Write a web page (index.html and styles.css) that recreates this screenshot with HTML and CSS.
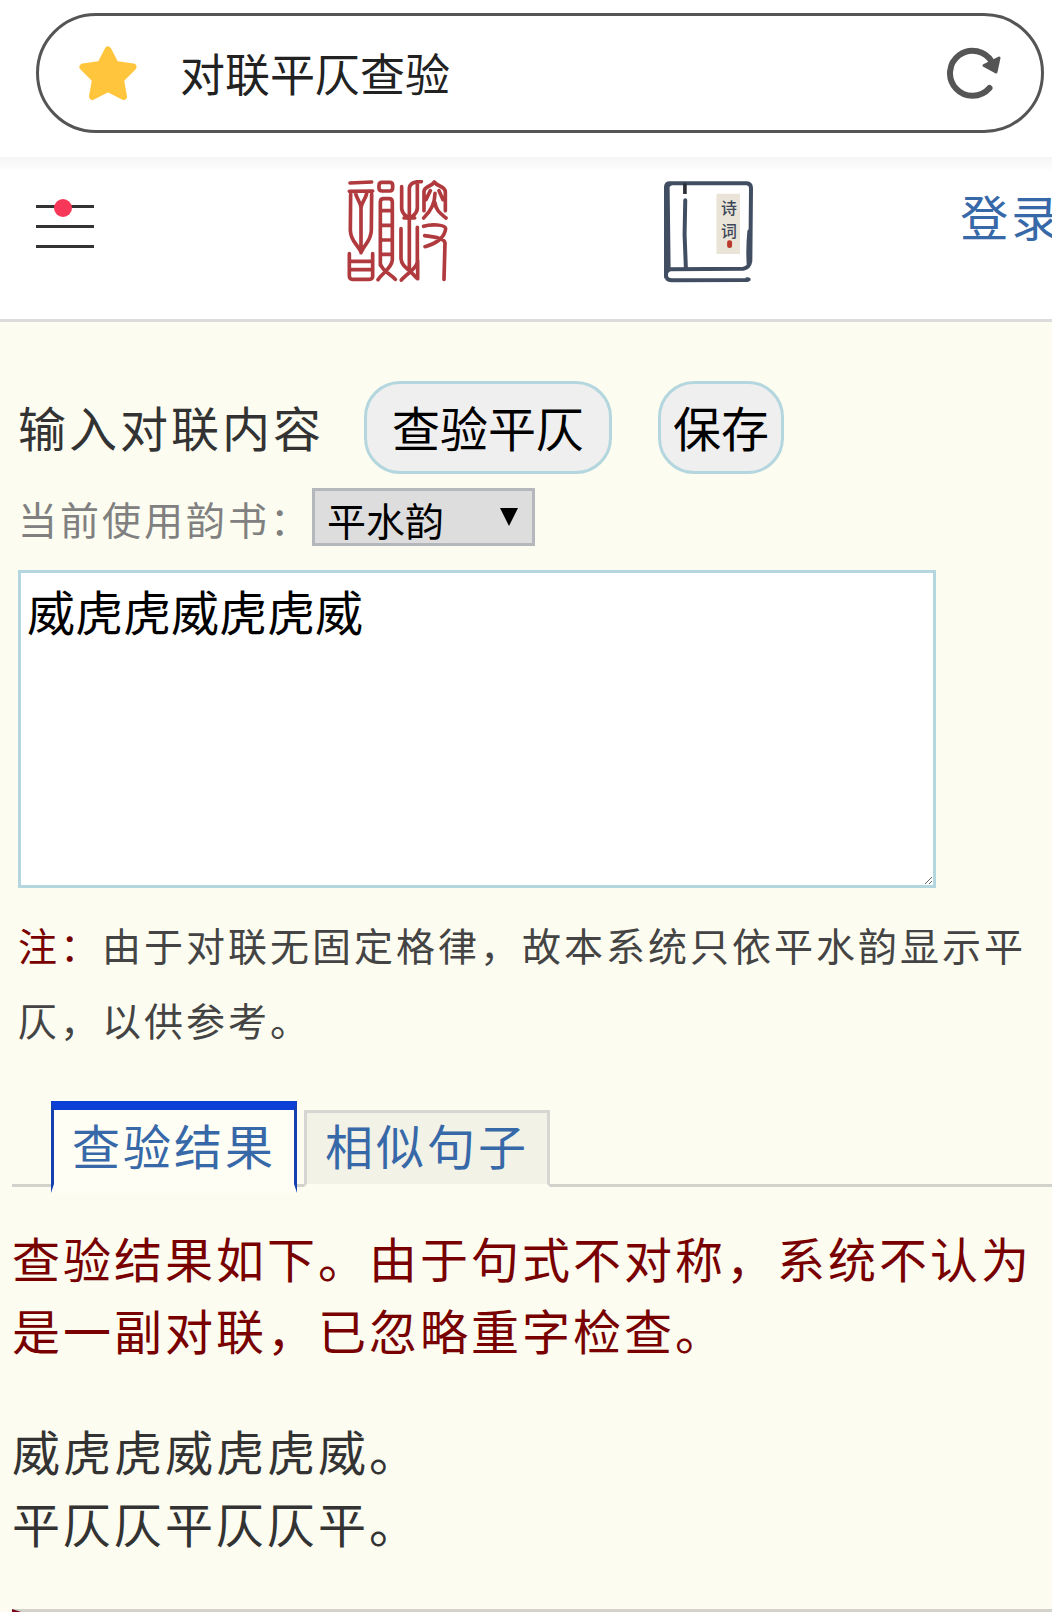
FILE: index.html
```html
<!DOCTYPE html>
<html lang="zh-CN">
<head>
<meta charset="utf-8">
<meta name="viewport" content="width=device-width">
<title>对联平仄查验</title>
<link rel="stylesheet" href="styles.css">
</head>
<body>
<div class="browser-bar">
  <div class="address">
    <svg class="star" viewBox="0 0 58 56" aria-hidden="true"><path d="M29 5 L36.500 19.500 L54 22 L41.500 34.500 L44.500 51.500 L29 43.500 L13.500 51.500 L16.500 34.500 L4 22 L21.500 19.500 Z"/></svg>
    <span class="address-title">对联平仄查验</span>
    <button class="reload" type="button" aria-label="刷新">
      <svg viewBox="0 0 54 52" aria-hidden="true"><path class="reload-arc" d="M45 15 A22.500 22.500 0 1 0 42.500 41"/><path class="reload-head" d="M37 18.500 L52 11 L49 25 Z"/></svg>
    </button>
  </div>
</div>

<header class="site-header">
  <button class="menu" type="button" aria-label="菜单">
    <span class="menu-line"></span><span class="menu-line"></span><span class="menu-line"></span>
    <span class="menu-dot"></span>
  </button>
  <a class="logo" href="#" aria-label="搜韵">
    <svg class="seal" viewBox="52 44 304 309" aria-hidden="true">
      <path d="M60 53 L125 50 M58 78 L128 77 M62 86 L61 195 C62 228 82 236 92 258 M125 86 L124 195 C123 228 104 236 95 258 M77 84 C80 102 93 112 93 128 C94 112 107 102 110 84 M93 125 V262 M58 265 V332 Q58 342 68 342 H118 Q128 342 128 332 V265 M60 288 H126 M60 313 H126"/>
      <path d="M156 51 H179 Q188 51 188 60 V68 Q188 77 179 77 H156 Q147 77 147 68 V60 Q147 51 156 51 M151 300 V110 Q151 100 161 100 H177 Q187 100 187 110 V285 C184 310 158 322 144 343 M151 295 C156 318 182 325 196 342 M152 136 H186 M152 180 H186 M152 224 H186 M152 267 H186"/>
      <path d="M215 64 V130 C216 148 230 151 238 162 C246 151 261 148 262 130 V50 M238 320 V68 C240 53 253 48 274 49 M213 190 V280 C215 305 236 309 260 338 M262 186 V290 C259 312 230 325 214 344 M222 158 H254 M263 285 V340"/>
      <path d="M282 136 V78 C283 62 304 65 313 50 C322 65 345 60 346 80 V136 M301 76 L288 103 M327 76 L339 103 M315 84 C315 117 301 139 281 158 M315 112 C318 137 333 145 348 158 M281 183 C304 175 346 178 347 190 C344 220 313 237 285 244 M284 211 C301 214 343 217 345 232 L342 342"/>
    </svg>
  </a>
  <a class="logo" href="#" aria-label="诗词">
    <svg class="book" viewBox="70 46 274 310" aria-hidden="true">
      <rect class="book-label" x="231" y="87" width="71" height="182" rx="4"/>
      <path class="book-line" d="M79 338 V66 Q80 56 91 56 H322 Q335 57 335 70 L333 290 Q330 310 312 313 L92 315 Q78 318 79 334 Q80 347 96 348 L323 347 Q333 345 323 345 M92 58 Q82 62 84 72 L87 315 M137 107 L135 210 L139 315 M330 200 Q325 250 328 300"/>
      <path class="book-tie" d="M136 56 V88"/>
      <text class="book-text" x="245" y="148">诗</text>
      <text class="book-text" x="245" y="218">词</text>
      <rect class="book-stamp" x="263" y="227" width="15" height="24" rx="7"/>
    </svg>
  </a>
  <a class="login" href="#">登录</a>
</header>

<main>
  <form class="checker">
    <div class="actions">
      <label class="actions-label" for="couplet">输入对联内容</label>
      <button class="pill pill-wide" type="button">查验平仄</button>
      <button class="pill" type="button">保存</button>
    </div>
    <div class="book-row">
      <label class="book-row-label" for="rhyme">当前使用韵书：</label>
      <span class="select-box">
        <select id="rhyme"><option>平水韵</option></select>
        <span class="select-arrow"></span>
      </span>
    </div>
    <textarea id="couplet">威虎虎威虎虎威</textarea>
    <p class="note"><span class="note-mark">注：</span>由于对联无固定格律，故本系统只依平水韵显示平仄，以供参考。</p>
  </form>

  <section class="results">
    <nav class="tabs">
      <a class="tab tab-active" href="#result">查验结果</a>
      <a class="tab" href="#similar">相似句子</a>
    </nav>
    <p class="message">查验结果如下。由于句式不对称，系统不认为是一副对联，已忽略重字检查。</p>
    <p class="verse" id="result">威虎虎威虎虎威。<br>平仄仄平仄仄平。</p>
    <div class="panel"></div>
  </section>
</main>
</body>
</html>
```
FILE: styles.css
```css
* {
  box-sizing: border-box;
}

body {
  margin: 0;
  overflow-x: hidden;
  background: #fcfcf0;
  color: #333;
  font-family: "Noto Sans CJK SC", sans-serif;
  font-size: 48px;
  line-height: 72px;
  letter-spacing: 3px;
  text-spacing-trim: space-all;
}

a {
  color: #3768a8;
  text-decoration: none;
}

p {
  margin: 0;
}

button,
select,
textarea {
  margin: 0;
  color: #000;
  font-family: inherit;
  letter-spacing: 0;
}

/* browser address bar */
.browser-bar {
  padding: 13px 8px 24px 36px;
  background: #fff;
}

.address {
  display: flex;
  align-items: center;
  height: 120px;
  padding: 0 40px;
  border: 3px solid #555;
  border-radius: 60px;
}

.star {
  width: 58px;
  height: 56px;
  fill: #ffc53d;
  stroke: #ffc53d;
  stroke-width: 7;
  stroke-linejoin: round;
}

.address-title {
  flex: 1;
  margin-left: 43px;
  color: #222;
  font-size: 45px;
  letter-spacing: 0;
}

.reload {
  width: 54px;
  height: 52px;
  padding: 0;
  border: 0;
  background: none;
}

.reload svg {
  display: block;
  width: 100%;
  height: 100%;
}

.reload-arc {
  fill: none;
  stroke: #555;
  stroke-width: 6;
  stroke-linecap: round;
}

.reload-head {
  fill: #555;
  stroke: #555;
  stroke-width: 3;
  stroke-linejoin: round;
}

/* site header */
.site-header {
  display: grid;
  grid-template-columns: minmax(0, 33fr) minmax(0, 30fr) minmax(0, 28fr) minmax(0, 9fr);
  align-items: start;
  height: 165px;
  padding-top: 23px;
  overflow: hidden;
  border-bottom: 3px solid #dcdcdc;
  background: linear-gradient(#f5f5f5, #fff 15px);
}

.menu {
  position: relative;
  display: grid;
  gap: 17px;
  width: 58px;
  margin: 25px 0 0 36px;
  padding: 0;
  border: 0;
  background: none;
}

.menu-line {
  height: 3px;
  background: #333;
}

.menu-dot {
  position: absolute;
  top: -6px;
  left: 18px;
  width: 18px;
  height: 18px;
  border-radius: 50%;
  background: #f73859;
}

.logo {
  line-height: 0;
}

.seal {
  width: 102px;
  height: 103px;
  fill: none;
  stroke: #b03a3e;
  stroke-width: 11;
  stroke-linecap: round;
  stroke-linejoin: round;
}

.book {
  width: 91px;
  height: 103px;
}

.book-line {
  fill: none;
  stroke: #414e62;
  stroke-width: 12;
  stroke-linecap: round;
  stroke-linejoin: round;
}

.book-tie {
  stroke: #2b2e35;
  stroke-width: 11;
}

.book-label {
  fill: #e9e3d8;
}

.book-text {
  fill: #3d4757;
  font-size: 48px;
  font-weight: 500;
  letter-spacing: 0;
}

.book-stamp {
  fill: #b93a2a;
}

.login {
  padding-left: 3px;
  line-height: 70px;
  white-space: nowrap;
}

/* input form */
.checker {
  padding: 59px 18px 0;
}

.actions {
  display: flex;
  align-items: center;
}

.actions-label {
  margin-right: 40px;
  padding-bottom: 4px;
}

.pill {
  height: 93px;
  padding: 0 12px 4px;
  border: 3px solid #b4d6de;
  border-radius: 36px;
  background: #efefef;
  font-size: 48px;
  line-height: 72px;
}

.pill-wide {
  margin-right: 46px;
  padding: 0 25px 4px;
}

.book-row {
  display: flex;
  align-items: center;
  margin-top: 14px;
  font-size: 39px;
  line-height: 56px;
}

.book-row-label {
  padding-top: 2px;
  color: #808080;
}

.select-box {
  position: relative;
  display: flex;
}

.select-box select {
  width: 223px;
  height: 58px;
  padding: 0 12px;
  appearance: none;
  border: 3px solid #b4b7bc;
  border-radius: 0;
  background: #ddd;
  font-size: 39px;
}

.select-arrow {
  position: absolute;
  top: 20px;
  right: 17px;
  width: 18px;
  height: 18px;
  background: #000;
  clip-path: polygon(0 0, 100% 0, 50% 100%);
  pointer-events: none;
}

textarea {
  display: block;
  width: 918px;
  max-width: 100%;
  height: 318px;
  margin-top: 24px;
  padding: 6px;
  border: 3px solid #b4d6de;
  background: #fff;
  font-size: 48px;
  line-height: 62px;
}

.note {
  padding-top: 19px;
  color: #444;
  font-size: 39px;
  line-height: 75px;
}

.note-mark {
  color: #780000;
}

/* results */
.results {
  padding-left: 12px;
}

.tabs {
  display: flex;
  align-items: flex-end;
  gap: 7px;
  height: 86px;
  margin-top: 44px;
  padding-left: 39px;
  border-bottom: 3px solid #d2d2cd;
}

.tab {
  height: 77px;
  margin-bottom: -3px;
  padding: 0 18px;
  border: 3px solid #d6d6d2;
  border-bottom-color: #fcfcf0;
  background: #f2f2e7;
  line-height: 62px;
}

.tab-active {
  height: 92px;
  margin-bottom: -9px;
  border-color: #0b3fd6 #1440b0 #fefef5;
  border-width: 9px 3px;
  background: #fefef5;
  line-height: 68px;
}

.message {
  margin-top: 34px;
  padding-right: 18px;
  color: #780000;
}

.verse {
  margin-top: 49px;
}

.panel {
  height: 60px;
  margin-top: 51px;
  border-top: 3px solid #d3d3cc;
  border-left: 9px solid #780014;
}
```
